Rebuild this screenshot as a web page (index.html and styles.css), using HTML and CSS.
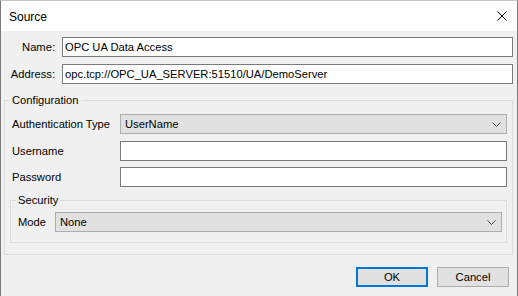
FILE: index.html
```html
<!DOCTYPE html>
<html>
  <head>
    <meta charset="utf-8">
    <title>Source</title>
    <link rel="stylesheet" href="styles.css">
  </head>
  <body>
    <div class="window">
      <div class="titlebar">
        <span class="title">Source</span>
        <svg class="close" width="10" height="10" viewBox="0 0 10 10">
          <path d="M0.5 0.5 L9.5 9.5 M9.5 0.5 L0.5 9.5" stroke="#000" stroke-width="1" fill="none"/>
        </svg>
      </div>

      <div class="content">
        <div class="row">
          <label class="top-label">Name:</label>
          <div class="textbox">OPC UA Data Access</div>
        </div>
        <div class="row address">
          <label class="top-label">Address:</label>
          <div class="textbox">opc.tcp://OPC_UA_SERVER:51510/UA/DemoServer</div>
        </div>

        <fieldset class="group config">
          <legend>Configuration</legend>
          <div class="row">
            <label class="conf-label">Authentication Type</label>
            <div class="combo">
              <span>UserName</span>
              <svg class="chev" width="9" height="5" viewBox="0 0 9 5">
                <path d="M0.5 0.5 L4.5 4.5 L8.5 0.5" stroke="#444" stroke-width="1" fill="none"/>
              </svg>
            </div>
          </div>
          <div class="row user">
            <label class="conf-label">Username</label>
            <div class="textbox"></div>
          </div>
          <div class="row pass">
            <label class="conf-label">Password</label>
            <div class="textbox"></div>
          </div>

          <fieldset class="group security">
            <legend>Security</legend>
            <div class="row">
              <label class="mode-label">Mode</label>
              <div class="combo">
                <span>None</span>
                <svg class="chev" width="9" height="5" viewBox="0 0 9 5">
                  <path d="M0.5 0.5 L4.5 4.5 L8.5 0.5" stroke="#444" stroke-width="1" fill="none"/>
                </svg>
              </div>
            </div>
          </fieldset>
        </fieldset>

        <div class="buttons">
          <button class="btn default">OK</button>
          <button class="btn">Cancel</button>
        </div>
      </div>
    </div>
  </body>
</html>
```

FILE: styles.css
```css
body, html {
  margin: 0;
}

body {
  font-family: "Liberation Sans", Arial, sans-serif;
  font-size: 11.2px;
  color: #000;
  background: #fff;
}

.window {
  width: 516px;
  height: 295px;
  border: 1px solid #7a7a7a;
  border-top-color: #c8c8c8;
  background-color: #f0f0f0;
}

.titlebar {
  height: 30px;
  background-color: #fff;
  display: flex;
  align-items: center;
  justify-content: space-between;
  padding: 0 10px 0 8px;
}

.title {
  font-size: 12px;
  margin-top: 1px;
}

.close {
  display: block;
}

.content {
  padding: 6px 4px 0 3px;
}

.row {
  display: flex;
  align-items: center;
  height: 20px;
}

.address {
  margin-top: 7px;
}

.top-label {
  width: 51px;
  text-align: right;
  margin-right: 7px;
}

.textbox {
  flex-grow: 1;
  height: 18px;
  line-height: 18px;
  border: 1px solid #7a7a7a;
  background-color: #fff;
  padding: 0 2px;
  white-space: nowrap;
  overflow: hidden;
}

.group {
  margin: 0;
  border: 1px solid #dcdcdc;
  padding: 0;
  min-width: 0;
}

.group legend {
  padding: 0 2px;
  line-height: 14px;
  margin-left: -2px;
}

.config {
  margin-top: 9px;
  padding: 7px 5px 11px 7px;
}

.conf-label {
  width: 108px;
  flex-shrink: 0;
}

.user {
  margin-top: 7px;
}

.pass {
  margin-top: 6px;
}

.combo {
  flex-grow: 1;
  height: 18px;
  border: 1px solid #adadad;
  background-color: #e1e1e1;
  display: flex;
  align-items: center;
  justify-content: space-between;
  padding: 0 5px 0 4px;
}

.chev {
  display: block;
}

.security {
  margin: 6px 0 0 -2px;
  padding: 5px 4px 10px 7px;
}

.mode-label {
  width: 37px;
  flex-shrink: 0;
}

.buttons {
  display: flex;
  justify-content: flex-end;
  gap: 9px;
  margin-top: 12px;
  padding-right: 4px;
}

.btn {
  width: 72px;
  height: 20px;
  font-family: "Liberation Sans", Arial, sans-serif;
  font-size: 11.2px;
  background-color: #e1e1e1;
  border: 1px solid #adadad;
  padding: 0;
  color: #000;
}

.btn.default {
  border: 2px solid #0078d7;
}
```
